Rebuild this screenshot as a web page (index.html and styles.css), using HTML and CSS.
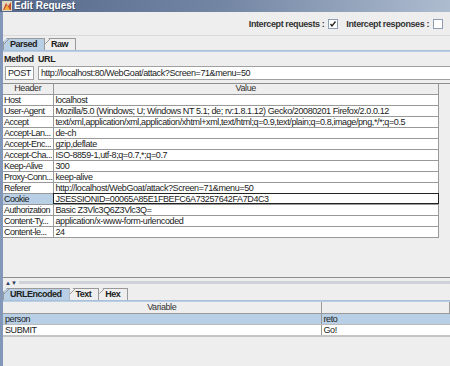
FILE: index.html
```html
<!DOCTYPE html>
<html>
<head>
<meta charset="utf-8">
<link rel="stylesheet" href="styles.css">
</head>
<body>
<div class="window">
  <div class="titlebar">
    <svg class="ticon" width="10" height="10" viewBox="0 0 10 10">
      <rect x="0" y="0" width="10" height="10" fill="#e2d6bd"/>
      <path d="M1 9 L4 2 L6 5 L9 1 L9 9 Z" fill="#c8502a"/>
      <path d="M2 9 L5 4 L8 9 Z" fill="#f0b040"/>
    </svg>
    <span class="ttext">Edit Request</span>
  </div>
  <div class="frame">
    <div class="toolbar">
      <span class="clabel">Intercept requests :</span>
      <span class="cbox checked"><svg width="8" height="8" viewBox="0 0 8 8"><path d="M1.5 4 L3 6 L6.5 1.5" stroke="#222" stroke-width="1.3" fill="none"/></svg></span>
      <span class="clabel">Intercept responses :</span>
      <span class="cbox"></span>
    </div>
    <div class="tabstrip">
      <div class="tab selected">Parsed</div>
      <div class="tab">Raw</div>
    </div>
    <div class="tabline"></div>
    <div class="panel">
      <div class="labels"><span class="lm">Method</span><span>URL</span></div>
      <div class="fields">
        <div class="field method">POST</div>
        <div class="field url">http://localhost:80/WebGoat/attack?Screen=71&amp;menu=50</div>
      </div>
      <div class="scrollpane">
        <table class="grid headers">
          <colgroup><col class="c1"><col class="c2"></colgroup>
          <thead><tr><th>Header</th><th>Value</th></tr></thead>
          <tbody>
            <tr><td>Host</td><td>localhost</td></tr>
            <tr><td>User-Agent</td><td>Mozilla/5.0 (Windows; U; Windows NT 5.1; de; rv:1.8.1.12) Gecko/20080201 Firefox/2.0.0.12</td></tr>
            <tr><td>Accept</td><td>text/xml,application/xml,application/xhtml+xml,text/html;q=0.9,text/plain;q=0.8,image/png,*/*;q=0.5</td></tr>
            <tr><td>Accept-Lan...</td><td>de-ch</td></tr>
            <tr><td>Accept-Enc...</td><td>gzip,deflate</td></tr>
            <tr><td>Accept-Cha...</td><td>ISO-8859-1,utf-8;q=0.7,*;q=0.7</td></tr>
            <tr><td>Keep-Alive</td><td>300</td></tr>
            <tr><td>Proxy-Conn...</td><td>keep-alive</td></tr>
            <tr><td>Referer</td><td>http://localhost/WebGoat/attack?Screen=71&amp;menu=50</td></tr>
            <tr class="sel"><td class="selcell">Cookie</td><td class="editcell">JSESSIONID=00065A85E1FBEFC6A73257642FA7D4C3</td></tr>
            <tr><td>Authorization</td><td>Basic Z3Vlc3Q6Z3Vlc3Q=</td></tr>
            <tr><td>Content-Ty...</td><td>application/x-www-form-urlencoded</td></tr>
            <tr><td>Content-le...</td><td>24</td></tr>
          </tbody>
        </table>
      </div>
    </div>
    <div class="splitter">
      <span class="arrows">&#9650;&#9660;</span>
      <span class="bumps"></span>
    </div>
    <div class="tabstrip bottomtabs">
      <div class="tab selected">URLEncoded</div>
      <div class="tab">Text</div>
      <div class="tab">Hex</div>
    </div>
    <div class="tabline"></div>
    <table class="grid vars">
      <colgroup><col class="v1"><col class="v2"></colgroup>
      <thead><tr><th>Variable</th><th></th></tr></thead>
      <tbody>
        <tr class="rowsel"><td>person</td><td>reto</td></tr>
        <tr><td>SUBMIT</td><td>Go!</td></tr>
      </tbody>
    </table>
  </div>
</div>
</body>
</html>
```
FILE: styles.css
```css
* { box-sizing: border-box; }
html, body { margin: 0; padding: 0; }
body {
  width: 450px;
  height: 366px;
  overflow: hidden;
  background: #eeeeee;
  font-family: "Liberation Sans", Arial, sans-serif;
  font-size: 9px;
  letter-spacing: -0.4px;
  color: #222;
}
.window { width: 450px; height: 366px; display: flex; flex-direction: column; }
.titlebar {
  height: 12px;
  display: flex;
  align-items: center;
  gap: 2px;
  padding-left: 2px;
  background: linear-gradient(to right, #56698a 0%, #7386a4 50%, #aebccf 100%);
}
.ttext {
  color: #fff;
  font-weight: bold;
  font-size: 10px;
  letter-spacing: 0;
  line-height: 12px;
  text-shadow: 1px 1px 0 #3a4a66;
}
.frame {
  flex: 1;
  border-left: 3px solid #8397b8;
  display: flex;
  flex-direction: column;
}
.toolbar {
  height: 24px;
  display: flex;
  align-items: center;
  justify-content: flex-end;
  padding-right: 7px;
  border-bottom: 1px solid #dadada;
}
.clabel { font-weight: bold; color: #333; margin-left: 8px; margin-right: 4px; }
.cbox {
  width: 10px; height: 10px;
  background: #fff;
  border: 1px solid #8d9db3;
  display: flex; align-items: center; justify-content: center;
}
.tabstrip {
  height: 14px;
  display: flex;
  align-items: flex-end;
}
.tab {
  height: 12px;
  padding: 0 7px 0 6px;
  border: 1px solid #999;
  border-bottom: none;
  border-left: none;
  font-weight: bold;
  letter-spacing: -0.5px;
  line-height: 11px;
  color: #222;
  background: #eeeeee;
  clip-path: polygon(4px 0, 100% 0, 100% 100%, 0 100%, 0 4px);
  position: relative;
}
.tab::before {
  content: "";
  position: absolute;
  left: 0; top: 0;
  width: 6px; height: 6px;
  background: linear-gradient(135deg, transparent 3px, #999 3px, #999 4px, transparent 4px);
}
.tab.selected {
  background: #b8cfe5;
  border-left: 1px solid #999;
}
.tabline { height: 2px; background: #b8cfe5; border-top: 1px solid #aac0d8; }
.panel { display: flex; flex-direction: column; }
.labels { height: 14px; display: flex; align-items: center; padding-left: 1px; font-weight: bold; }
.lm { width: 34px; }
.fields { display: flex; gap: 4px; padding-left: 2px; height: 14px; }
.field {
  height: 14px;
  border: 1px solid #a0a0a0;
  background: #fff;
  line-height: 12px;
  padding-left: 2px;
  white-space: nowrap;
  overflow: hidden;
}
.method { width: 29px; }
.url { flex: 1; border-right: none; }
.scrollpane {
  margin-top: 3px;
  height: 195px;
  border-top: 1px solid #8e8e8e;
  border-bottom: 1px solid #8e8e8e;
  background: #eeeeee;
}
.grid {
  border-collapse: collapse;
  table-layout: fixed;
  color: #222;
}
.headers { width: 436px; }
.c1 { width: 50px; }
.grid th {
  height: 10px;
  font-weight: normal;
  color: #333;
  background: #eeeeee;
  border-right: 1px solid #999;
  border-bottom: 1px solid #999;
  line-height: 9px;
  padding: 0;
  text-align: center;
}
.grid td {
  height: 11px;
  line-height: 10px;
  padding: 0 0 0 2px;
  white-space: nowrap;
  overflow: hidden;
  text-overflow: clip;
  background: #fff;
  border-right: 1px solid #999;
  border-bottom: 1px solid #999;
}
.headers td:first-child { padding-left: 1px; letter-spacing: -0.5px; }
.selcell { background: #b8cfe5 !important; }
.editcell { outline: 1px solid #222; outline-offset: -1px; }
.splitter {
  height: 9px;
  display: flex;
  align-items: center;
  gap: 2px;
  padding-left: 2px;
}
.arrows { font-size: 6px; color: #2a3a5a; letter-spacing: 0; line-height: 6px; }
.bumps {
  flex: 1;
  height: 3px;
  background-image: radial-gradient(circle, #a8b0c0 0.6px, transparent 0.8px);
  background-size: 2px 2px;
}
.bottomtabs { height: 13px; }
.vars { width: 447px; }
.v1 { width: 318px; }
.vars th { height: 11px; line-height: 10px; border-right: 1px solid #999; }
.vars tr.rowsel td { background: #b8cfe5; }
.vars td { border-bottom: 1px solid #bbb; }
.vars td:first-child { border-right: 1px solid #999; }
.vars td:last-child { border-right: none; }
.vars tbody tr:last-child td { border-bottom: 2px solid #c4c4c4; }
```
